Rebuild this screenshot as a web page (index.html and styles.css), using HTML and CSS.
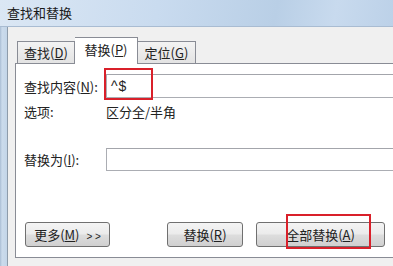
FILE: index.html
```html
<!DOCTYPE html>
<html lang="zh-CN">
<head>
    <meta charset="UTF-8">
    <title>查找和替换</title>
    <link rel="stylesheet" href="styles.css">
</head>
<body>
<div class="titlebar">查找和替换</div>
<div class="frame">
    <div class="frame-edge"></div>
    <div class="dialog">
        <div class="tabs">
            <div class="tab">查找(<u>D</u>)</div>
            <div class="tab active">替换(<u>P</u>)</div>
            <div class="tab">定位(<u>G</u>)</div>
        </div>
        <div class="panel">
            <div class="row row-find">
                <label>查找内容(<u>N</u>):</label>
                <div class="field">
                    <div class="input">^$</div>
                    <span class="mark mark-find"></span>
                </div>
            </div>
            <div class="row row-opt">
                <label>选项:</label>
                <span class="opt">区分全/半角</span>
            </div>
            <div class="row row-replace">
                <label>替换为(<u>I</u>):</label>
                <div class="field">
                    <div class="input input-empty"></div>
                </div>
            </div>
            <div class="buttons">
                <button class="btn btn-more">更多(<u>M</u>) <span class="arrows">&gt; &gt;</span></button>
                <button class="btn btn-replace">替换(<u>R</u>)</button>
                <div class="field">
                    <button class="btn btn-all">全部替换(<u>A</u>)</button>
                    <span class="mark mark-all"></span>
                </div>
            </div>
        </div>
    </div>
</div>
</body>
</html>
```

FILE: styles.css
```css
body {
    margin: 0;
    width: 393px;
    height: 266px;
    overflow: hidden;
    font-family: "Noto Sans CJK SC", "DejaVu Sans", sans-serif;
    font-size: 13px;
    color: #222;
    background: #f0f0f0;
}

u {
    text-decoration: underline;
    text-underline-offset: 1px;
}

.titlebar {
    height: 27px;
    line-height: 26px;
    padding-left: 7px;
    font-size: 13px;
    color: #1a1a1a;
    background: linear-gradient(100deg, #dbe7f4 0%, #c9dbef 40%, #b9cfe6 70%, #c8daee 85%, #bcd1e8 100%);
    border-bottom: 1px solid #a9bcd2;
    box-sizing: border-box;
}

.frame {
    display: flex;
    height: 239px;
}

.frame-edge {
    width: 7px;
    background: linear-gradient(90deg, #a9bdd4, #cbdbec 30%, #c3d5e8);
    border-right: 1px solid #8e9cab;
}

.dialog {
    flex: 1;
    display: flex;
    flex-direction: column;
    padding: 10px 0 0 7px;
    overflow: hidden;
}

.tabs {
    display: flex;
    align-items: flex-end;
    height: 26px;
    padding-left: 2px;
    position: relative;
    z-index: 1;
}

.tab {
    height: 22px;
    line-height: 21px;
    box-sizing: border-box;
    border: 1px solid #898c95;
    border-bottom: none;
    background: linear-gradient(#f3f3f3, #e3e3e3);
    text-align: center;
}

.tab:nth-child(1) { width: 58px; }
.tab:nth-child(3) { width: 58px; border-left: none; }

.tab.active {
    width: 63px;
    height: 27px;
    line-height: 23px;
    background: #fff;
    margin-bottom: -1px;
    border-left: none;
}

.panel {
    width: 400px;
    height: 195px;
    box-sizing: border-box;
    background: #fff;
    border: 1px solid #898c95;
    display: flex;
    flex-direction: column;
    padding: 10px 0 10px 8px;
}

.row {
    display: flex;
    align-items: center;
}

.row label {
    width: 82px;
    white-space: nowrap;
}

.field {
    position: relative;
    flex: 1;
}

.input {
    height: 24px;
    box-sizing: border-box;
    border: 1px solid #abadb3;
    border-top-color: #a3a5ab;
    font-family: "Liberation Sans", "DejaVu Sans", sans-serif;
    font-size: 14px;
    letter-spacing: 1px;
    color: #222;
    line-height: 22px;
    padding-left: 4px;
}

.row-opt {
    margin-top: 4px;
    height: 18px;
}

.row-replace {
    margin-top: 28px;
}

.input-empty {
    height: 23px;
}

.buttons {
    margin-top: auto;
    display: flex;
    align-items: center;
    padding-left: 1px;
}

.buttons .field {
    flex: none;
}

.btn {
    height: 25px;
    box-sizing: border-box;
    border: 1px solid #707070;
    border-radius: 3px;
    background: linear-gradient(#f4f4f4 0%, #ebebeb 48%, #dddddd 52%, #d0d0d0 100%);
    font-family: inherit;
    font-size: 13px;
    color: #222;
    padding: 0;
}

.arrows {
    font-family: "Liberation Sans", sans-serif;
    font-size: 10px;
    margin-left: 4px;
}

.btn-more { width: 85px; }
.btn-replace { width: 76px; margin-left: 57px; margin-right: 13px; }
.btn-all { width: 129px; display: block; }

.mark {
    position: absolute;
    border: 2px solid #d9202a;
}

.mark-find {
    left: -2px;
    top: -6px;
    width: 45px;
    height: 28px;
}

.mark-all {
    left: 30px;
    top: -8px;
    width: 81px;
    height: 31px;
}
```
